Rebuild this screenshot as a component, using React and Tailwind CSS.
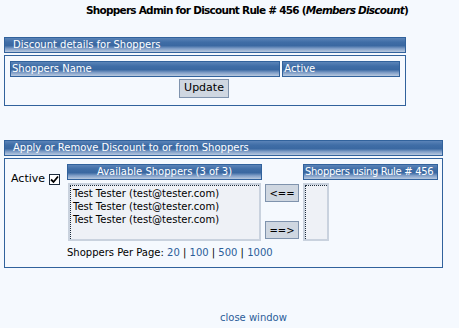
const bar =
  'bg-[linear-gradient(to_bottom,#5b84b8_0%,#3f6da6_30%,#3a68a1_55%,#7d9cc6_75%,#b9cae0_100%)] border border-[#31629c] text-white';

function Bar({ className = '', children }) {
  return <div className={`${bar} h-[16px] leading-[14px] ${className}`}>{children}</div>;
}

function ListBox({ className = '', items = [] }) {
  return (
    <div className={`border-2 border-[#c9d2de] bg-[#eef1f6] ${className}`}>
      <div className="h-full border-t border-l border-dotted border-[#1b2a3a] pl-[2px] pt-[1px] leading-[13px]">
        {items.map((it, i) => (
          <div key={i}>{it}</div>
        ))}
      </div>
    </div>
  );
}

function Btn({ children, className = '' }) {
  return (
    <div className={`flex items-center justify-center border border-[#7f93ad] bg-[#cfd7e1] text-black ${className}`}>
      {children}
    </div>
  );
}

export default function App() {
  const links = ['20', '100', '500', '1000'];
  return (
    <div className="min-h-screen bg-[#f5f9fe] font-['DejaVu_Sans',sans-serif] text-[10px] text-black">
      <div className="whitespace-nowrap pl-[86px] pt-[4px] text-[10.5px] font-bold leading-[13px] tracking-[-0.75px]">
        Shoppers Admin for Discount Rule # 456 (<i>Members Discount</i>)
      </div>

      <div className="ml-[4px] mt-[20px] w-[402px]">
        <Bar className="pl-[8px]">Discount details for Shoppers</Bar>
        <div className="mt-[2px] h-[51px] border border-[#31629c] px-[5px] pt-[5px]">
          <div className="flex gap-[2px]">
            <Bar className="w-[271px] pl-[1px]">Shoppers Name</Bar>
            <Bar className="w-[118px] pl-[1px]">Active</Bar>
          </div>
          <div className="mt-[2px] flex justify-center pr-[2px]">
            <Btn className="h-[19px] w-[50px] text-[11px]">Update</Btn>
          </div>
        </div>
      </div>

      <div className="ml-[4px] mt-[34px] w-[439px]">
        <Bar className="pl-[8px]">Apply or Remove Discount to or from Shoppers</Bar>
        <div className="mt-[2px] h-[110px] border border-[#31629c] pl-[6px] pt-[5px]">
          <div className="flex items-start">
            <div className="mt-[7px] flex w-[56px] items-center text-[11px]">
              Active
              <span className="ml-[4px] flex h-[11px] w-[11px] items-center justify-center border border-[#1c2b3c] bg-white">
                <svg width="9" height="9" viewBox="0 0 9 9">
                  <path d="M1 4.5 L3.5 7 L8 1.5" fill="none" stroke="#000" strokeWidth="1.8" />
                </svg>
              </span>
            </div>
            <div className="w-[195px]">
              <Bar className="text-center">Available Shoppers (3 of 3)</Bar>
              <ListBox
                className="ml-[1px] mt-[3px] h-[58px] w-[193px]"
                items={[
                  'Test Tester (test@tester.com)',
                  'Test Tester (test@tester.com)',
                  'Test Tester (test@tester.com)',
                ]}
              />
              <div className="mt-[5px] whitespace-nowrap leading-[13px]">
                Shoppers Per Page:{' '}
                {links.map((l, i) => (
                  <span key={l}>
                    <a className="text-[#2b5d99]">{l}</a>
                    {i < links.length - 1 && <span> | </span>}
                  </span>
                ))}
              </div>
            </div>
            <div className="ml-[3px] mt-[20px] flex flex-col gap-[19px]">
              <Btn className="h-[18px] w-[34px]">&lt;==</Btn>
              <Btn className="h-[18px] w-[34px]">==&gt;</Btn>
            </div>
            <div className="ml-[4px] w-[135px]">
              <Bar className="overflow-hidden whitespace-nowrap pl-[1px] tracking-[-0.3px]">Shoppers using Rule # 456</Bar>
              <ListBox className="mt-[3px] h-[58px] w-[26px]" />
            </div>
          </div>
        </div>
      </div>

      <div className="mt-[42px] pl-[220px] text-[#2b5d99]">close window</div>
    </div>
  );
}
